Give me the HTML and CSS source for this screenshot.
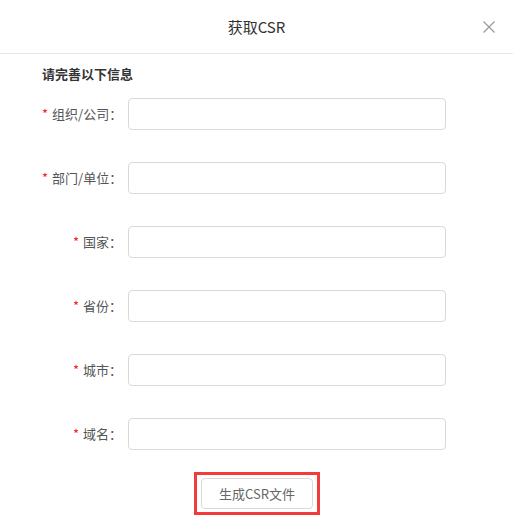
FILE: index.html
```html
<!DOCTYPE html>
<html lang="zh-CN">
<head>
<meta charset="utf-8">
<link rel="stylesheet" href="styles.css">
</head>
<body>
<div class="dialog">
  <div class="header">
    <span class="title">获取CSR</span>
    <span class="close" aria-label="close">
      <svg width="12" height="12" viewBox="0 0 12 12"><path d="M0.5 0.5 L11.5 11.5 M11.5 0.5 L0.5 11.5" stroke="#999" stroke-width="1.2" fill="none"/></svg>
    </span>
  </div>
  <div class="body">
    <div class="section-title">请完善以下信息</div>
    <div class="form">
      <label class="label"><span class="req">*</span>组织/公司：</label>
      <input class="input" type="text">
      <label class="label"><span class="req">*</span>部门/单位：</label>
      <input class="input" type="text">
      <label class="label"><span class="req">*</span>国家：</label>
      <input class="input" type="text">
      <label class="label"><span class="req">*</span>省份：</label>
      <input class="input" type="text">
      <label class="label"><span class="req">*</span>城市：</label>
      <input class="input" type="text">
      <label class="label"><span class="req">*</span>域名：</label>
      <input class="input" type="text">
    </div>
    <div class="actions">
      <div class="highlight">
        <button class="btn" type="button">生成CSR文件</button>
      </div>
    </div>
  </div>
</div>
</body>
</html>
```

FILE: styles.css
```css
html, body {
  margin: 0;
  padding: 0;
  background: #fff;
}
body {
  font-family: "Noto Sans CJK SC", "Noto Sans", "Liberation Sans", sans-serif;
  color: #333;
  width: 513px;
}
.dialog {
  width: 513px;
}
.header {
  position: relative;
  height: 53px;
  border-bottom: 1px solid #e8e8e8;
  display: flex;
  align-items: center;
  justify-content: center;
}
.title {
  font-size: 15px;
  line-height: 20px;
  color: #333;
}
.close {
  position: absolute;
  right: 18px;
  top: 21px;
  width: 12px;
  height: 12px;
  display: block;
}
.close svg {
  display: block;
}
.body {
  padding: 10px 0 0 42px;
}
.section-title {
  font-size: 13px;
  line-height: 20px;
  font-weight: bold;
  color: #333;
}
.form {
  margin-top: 14px;
  display: grid;
  grid-template-columns: 80px 318px;
  column-gap: 6px;
  row-gap: 32px;
  align-items: center;
}
.label {
  font-size: 13px;
  line-height: 20px;
  color: #555;
  text-align: right;
  white-space: nowrap;
}
.req {
  color: #f5222d;
  margin-right: 4px;
}
.input {
  box-sizing: border-box;
  width: 318px;
  height: 32px;
  margin: 0;
  border: 1px solid #d9d9d9;
  border-radius: 4px;
  background: #fff;
  outline: none;
}
.actions {
  margin-left: -42px;
  margin-top: 22px;
  display: flex;
  justify-content: center;
}
.highlight {
  border: 3px solid #f33b3b;
  padding: 3px 4px 0px 4px;
  height: 34px;
  margin-left: 1px;
}
.btn {
  box-sizing: border-box;
  width: 112px;
  height: 31px;
  margin: 0;
  border: 1px solid #d9d9d9;
  border-radius: 4px;
  background: #fff;
  font-family: "Noto Sans CJK SC", "Noto Sans", "Liberation Sans", sans-serif;
  font-size: 13px;
  color: #666;
  padding: 0;
}
```
